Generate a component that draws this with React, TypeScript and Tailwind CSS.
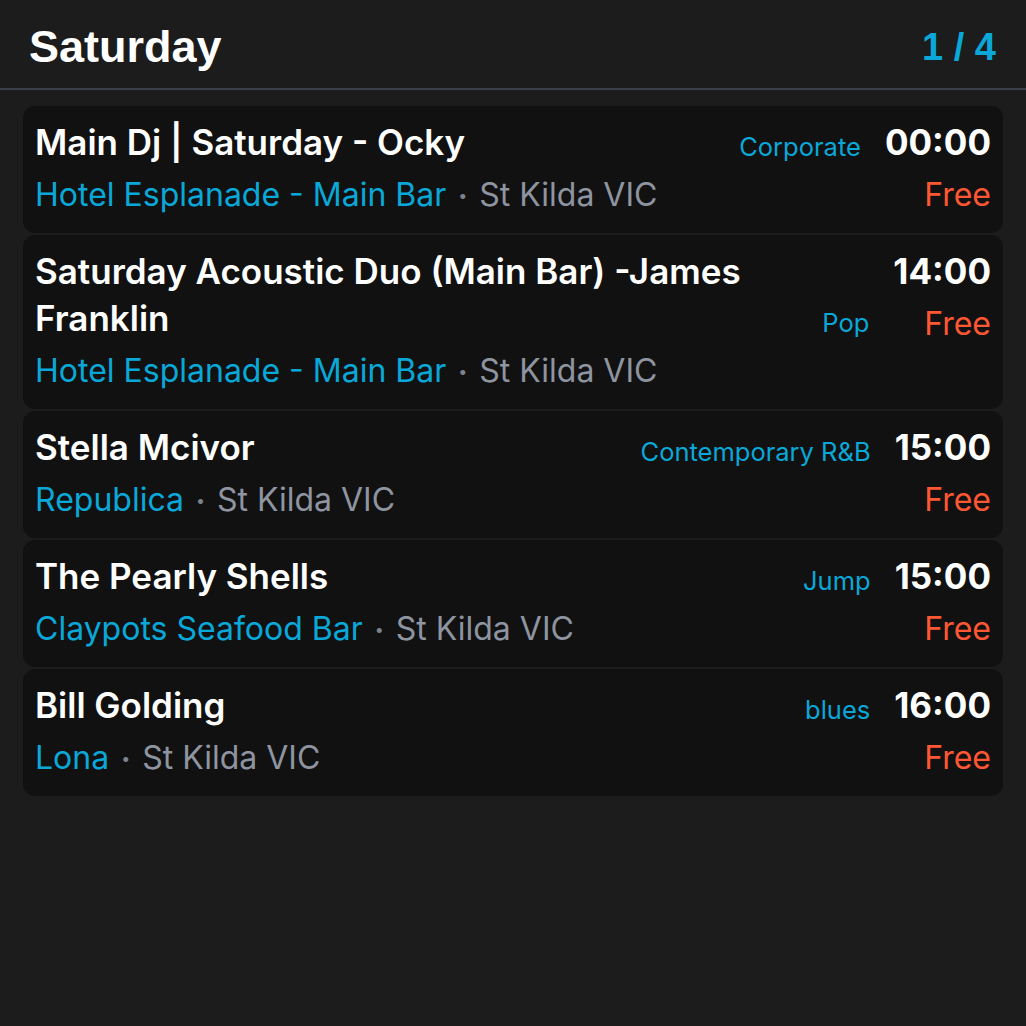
import React from 'react'

type Gig = {
  title: string
  venue: string
  suburb: string
  genre: string
  time: string
  price: string
}

const gigs: Gig[] = [
  { title: 'Main Dj | Saturday - Ocky', venue: 'Hotel Esplanade - Main Bar', suburb: 'St Kilda VIC', genre: 'Corporate', time: '00:00', price: 'Free' },
  { title: 'Saturday Acoustic Duo (Main Bar) -James Franklin', venue: 'Hotel Esplanade - Main Bar', suburb: 'St Kilda VIC', genre: 'Pop', time: '14:00', price: 'Free' },
  { title: 'Stella Mcivor', venue: 'Republica', suburb: 'St Kilda VIC', genre: 'Contemporary R&B', time: '15:00', price: 'Free' },
  { title: 'The Pearly Shells', venue: 'Claypots Seafood Bar', suburb: 'St Kilda VIC', genre: 'Jump', time: '15:00', price: 'Free' },
  { title: 'Bill Golding', venue: 'Lona', suburb: 'St Kilda VIC', genre: 'blues', time: '16:00', price: 'Free' },
]

function GigCard({ gig }: { gig: Gig }) {
  return (
    <div className="flex rounded-xl bg-[#111111] px-3 pt-[13px] pb-[18px]">
      <div className="flex-1 min-w-0">
        <div className="flex items-end">
          <h3 className="flex-1 pr-6 text-[35px] leading-[47px] font-semibold text-white">{gig.title}</h3>
          <span className="mb-[2px] text-[25.5px] leading-[34px] text-[#0aa8d8] whitespace-nowrap">{gig.genre}</span>
        </div>
        <div className="mt-[9px] flex items-center text-[32px] leading-[40px]">
          <span className="text-[#0aa8d8]">{gig.venue}</span>
          <span className="mx-3 text-[16px] text-[#7c828e]">•</span>
          <span className="text-[#8e94a0]">{gig.suburb}</span>
        </div>
      </div>
      <div className="ml-[24px] flex flex-col items-end">
        <span className="text-[35px] leading-[47px] font-bold text-white">{gig.time}</span>
        <span className="mt-[9px] text-[32px] leading-[40px] text-[#ff5733]">{gig.price}</span>
      </div>
    </div>
  )
}

export default function App() {
  return (
    <div className="min-h-[1026px] bg-[#1c1c1c] font-['Inter',sans-serif]">
      <header className="flex h-[90px] items-center justify-between border-b-2 border-[#3a414d] pt-[6px] pl-[29px] pr-[30px] font-['Liberation_Sans',Arial,sans-serif] font-bold">
        <h1 className="text-[45px] text-white">Saturday</h1>
        <span className="text-[38px] text-[#0aa8d8]">1 / 4</span>
      </header>
      <div className="flex flex-col gap-[2px] px-[23px] pt-[16px]">
        {gigs.map((g) => (
          <GigCard key={g.title} gig={g} />
        ))}
      </div>
    </div>
  )
}
